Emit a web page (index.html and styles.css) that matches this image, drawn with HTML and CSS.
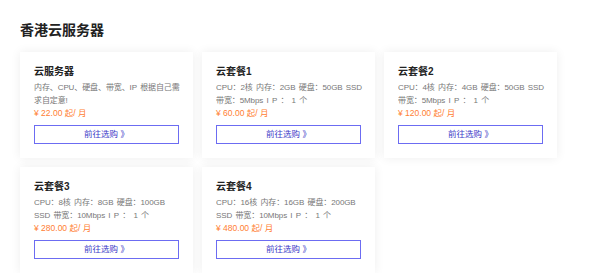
FILE: index.html
```html
<!DOCTYPE html>
<html lang="zh">
<head>
<meta charset="utf-8">
<title>香港云服务器</title>
<link rel="stylesheet" href="styles.css">
</head>
<body>
<div class="page">
  <h1 class="title">香港云服务器</h1>
  <div class="grid">
    <div class="card">
      <div class="card-title">云服务器</div>
      <div class="desc">内存、CPU、硬盘、带宽、IP 根据自己需求自定意!</div>
      <div class="price">¥ 22.00 起/ 月</div>
      <a class="btn">前往选购 》</a>
    </div>
    <div class="card">
      <div class="card-title">云套餐1</div>
      <div class="desc">CPU：2核 内存：2GB 硬盘：50GB SSD 带宽：5Mbps I P ： 1 个</div>
      <div class="price">¥ 60.00 起/ 月</div>
      <a class="btn">前往选购 》</a>
    </div>
    <div class="card">
      <div class="card-title">云套餐2</div>
      <div class="desc">CPU：4核 内存：4GB 硬盘：50GB SSD 带宽：5Mbps I P ： 1 个</div>
      <div class="price">¥ 120.00 起/ 月</div>
      <a class="btn">前往选购 》</a>
    </div>
    <div class="card">
      <div class="card-title">云套餐3</div>
      <div class="desc">CPU：8核 内存：8GB 硬盘：100GB SSD 带宽：10Mbps I P ： 1 个</div>
      <div class="price">¥ 280.00 起/ 月</div>
      <a class="btn">前往选购 》</a>
    </div>
    <div class="card">
      <div class="card-title">云套餐4</div>
      <div class="desc">CPU：16核 内存：16GB 硬盘：200GB SSD 带宽：10Mbps I P ： 1 个</div>
      <div class="price">¥ 480.00 起/ 月</div>
      <a class="btn">前往选购 》</a>
    </div>
  </div>
</div>
</body>
</html>
```
FILE: styles.css
```css
* { box-sizing: border-box; }
body {
  margin: 0;
  background: #ffffff;
  font-family: "Liberation Sans", "Noto Sans CJK SC", sans-serif;
}
.page {
  padding: 20px 20px 0 20px;
}
.title {
  margin: 0;
  font-size: 14px;
  line-height: 20px;
  font-weight: bold;
  color: #222;
}
.grid {
  margin-top: 12px;
  display: grid;
  grid-template-columns: repeat(3, 173px);
  column-gap: 9px;
  row-gap: 9px;
}
.card {
  background: #fff;
  padding: 14px 10px 14px 14px;
  box-shadow: 0 0 10px rgba(0, 0, 0, 0.07);
  height: 106px;
}
.card-title {
  font-size: 10px;
  line-height: 12px;
  font-weight: bold;
  color: #222;
  margin-bottom: 4px;
}
.desc {
  font-size: 8px;
  line-height: 12.5px;
  letter-spacing: -0.1px;
  word-spacing: 1.2px;
  color: #777;
  height: 25px;
  overflow: hidden;
}
.price {
  font-size: 8.5px;
  line-height: 12px;
  color: #ff8033;
}
.btn {
  display: block;
  margin-top: 6px;
  margin-right: 4px;
  height: 19px;
  border: 1px solid #6c6cf2;
  color: #3b3bc8;
  font-size: 8.5px;
  line-height: 17px;
  text-align: center;
}
```
